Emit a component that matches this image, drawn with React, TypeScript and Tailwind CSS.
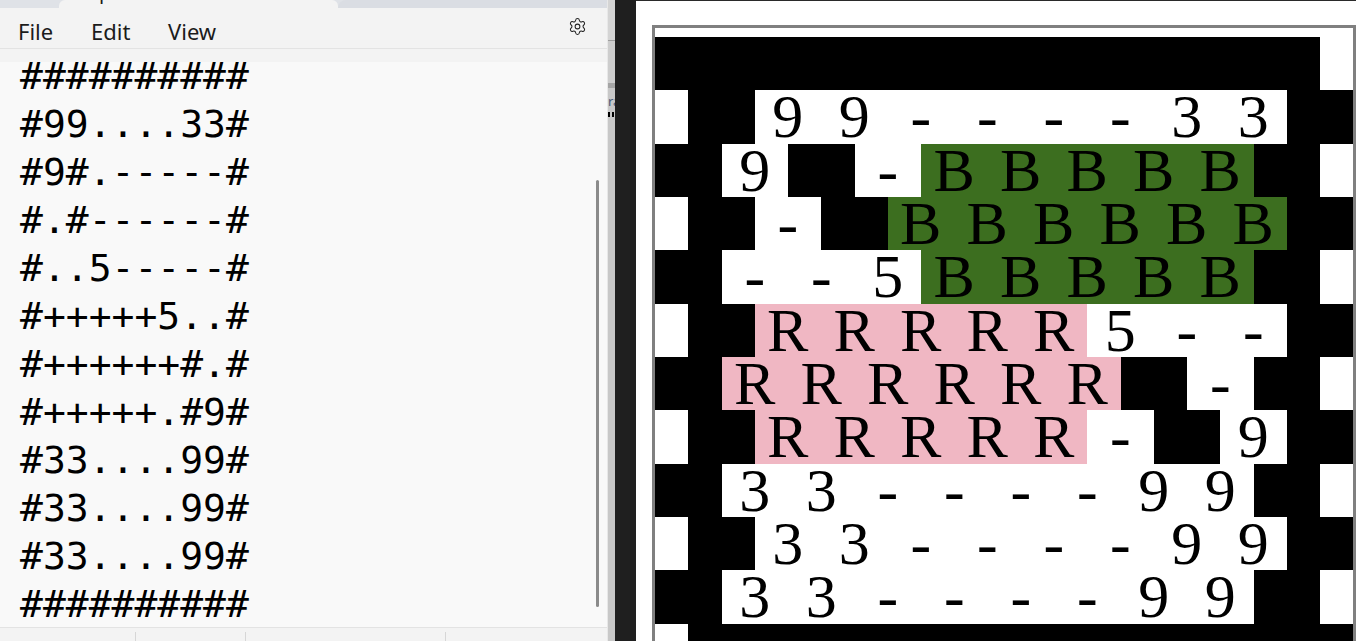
import React from "react";
import { Settings } from "lucide-react";

const MAP = [
  "##########",
  "#99....33#",
  "#9#.-----#",
  "#.#------#",
  "#..5-----#",
  "#+++++5..#",
  "#++++++#.#",
  "#+++++.#9#",
  "#33....99#",
  "#33....99#",
  "#33....99#",
  "##########",
];

function Cell({ ch }: { ch: string }) {
  const base =
    "w-[66.5px] shrink-0 h-full text-center leading-[53.33px] text-[62px] text-black";
  if (ch === "#") return <div className={`${base} bg-black`} />;
  if (ch === ".")
    return <div className={`${base} bg-white`}>-</div>;
  if (ch === "-")
    return <div className={`${base} bg-[#3c6e1f]`}>B</div>;
  if (ch === "+")
    return <div className={`${base} bg-[#f0b7c3]`}>R</div>;
  return <div className={`${base} bg-white`}>{ch}</div>;
}

function Notepad() {
  return (
    <div className="flex h-full w-[607px] shrink-0 flex-col bg-[#f9f9f9] font-['Noto_Sans',sans-serif]">
      {/* tab strip */}
      <div className="flex h-[8px] shrink-0 bg-[#dfe2e7]">
        <div className="w-[59px] shrink-0" />
        <div className="w-[279px] shrink-0 overflow-hidden rounded-t-[6px] bg-[#f3f3f3] pl-[40px]">
          <div className="-mt-[18px] text-[20px] leading-[20px] text-[#1a1a1a]">p</div>
        </div>
        <div className="flex-1 rounded-tl-[8px] bg-[#dadde3]" />
      </div>
      {/* menu bar */}
      <div className="flex h-[40px] shrink-0 items-start bg-[#f3f3f3] pl-[18px] pr-[20px] pt-[12px] text-[22px] leading-[22px] text-[#1b1b1b]">
        <div className="w-[73px]">File</div>
        <div className="w-[77px]">Edit</div>
        <div className="flex-1">View</div>
        <div className="-mt-[3px]">
          <Settings size={19} strokeWidth={1.3} color="#222" />
        </div>
      </div>
      <div className="h-px shrink-0 bg-[#e3e3e3]" />
      <div className="h-[13px] shrink-0 bg-[#f3f3f3]" />
      {/* text area */}
      <div className="relative flex-1 overflow-hidden bg-[#f9f9f9]">
        <div className="-mt-[10px] pl-[20px] font-['DejaVu_Sans_Mono',monospace] text-[38px] leading-[48px] text-black whitespace-pre">
          {MAP.map((r, i) => (
            <div key={i}>{r}</div>
          ))}
        </div>
        <div className="absolute left-[596px] top-[118px] h-[427px] w-[3px] rounded-full bg-[#8b8b8b]" />
      </div>
      <div className="h-px shrink-0 bg-[#e3e3e3]" />
      {/* status bar */}
      <div className="flex h-[13px] shrink-0 bg-[#f3f3f3] pt-[4px]">
        <div className="w-[136px] shrink-0 border-r border-[#d6d6d6]" />
        <div className="w-[110px] shrink-0 border-r border-[#d6d6d6]" />
        <div className="w-[200px] shrink-0 border-r border-[#d6d6d6]" />
        <div className="flex-1" />
      </div>
    </div>
  );
}

function BackStrip() {
  return (
    <div className="flex h-full w-[8px] shrink-0 flex-col border-l border-[#e8e8e8] bg-[#c8c8c8]">
      <div className="h-[40px] bg-[#d4d4d4]" />
      <div className="h-px bg-[#9d9d9d]" />
      <div className="h-[42px] bg-[#cdcdcd]" />
      <div className="h-[5px] bg-[#a5a5a5]" />
      <div className="overflow-hidden pt-[6px] font-['Noto_Sans',sans-serif] text-[13px] leading-[14px] text-[#4a5a7a]">
        ra
      </div>
      <div className="mt-[4px] h-[5px] w-[6px] border-l-2 border-r-2 border-black" />
    </div>
  );
}

function Browser() {
  return (
    <div className="h-full flex-1 overflow-hidden border-t border-[#2a2a2a] bg-white pl-[16px] pt-[24px]">
      <div className="w-[704px] border-[3px] border-[#808080] bg-white pt-[9px] font-['Liberation_Serif',serif]">
        {MAP.map((r, i) => (
          <div
            key={i}
            className={`flex h-[53.33px] ${i % 2 === 1 ? "pl-[33px]" : ""}`}
          >
            {r.split("").map((ch, j) => (
              <Cell key={j} ch={ch} />
            ))}
          </div>
        ))}
      </div>
    </div>
  );
}

export default function App() {
  return (
    <div className="flex h-[641px] w-[1356px] overflow-hidden bg-[#1f1f1f]">
      <Notepad />
      <BackStrip />
      <div className="w-[21px] shrink-0 bg-[#1f1f1f]" />
      <Browser />
    </div>
  );
}
